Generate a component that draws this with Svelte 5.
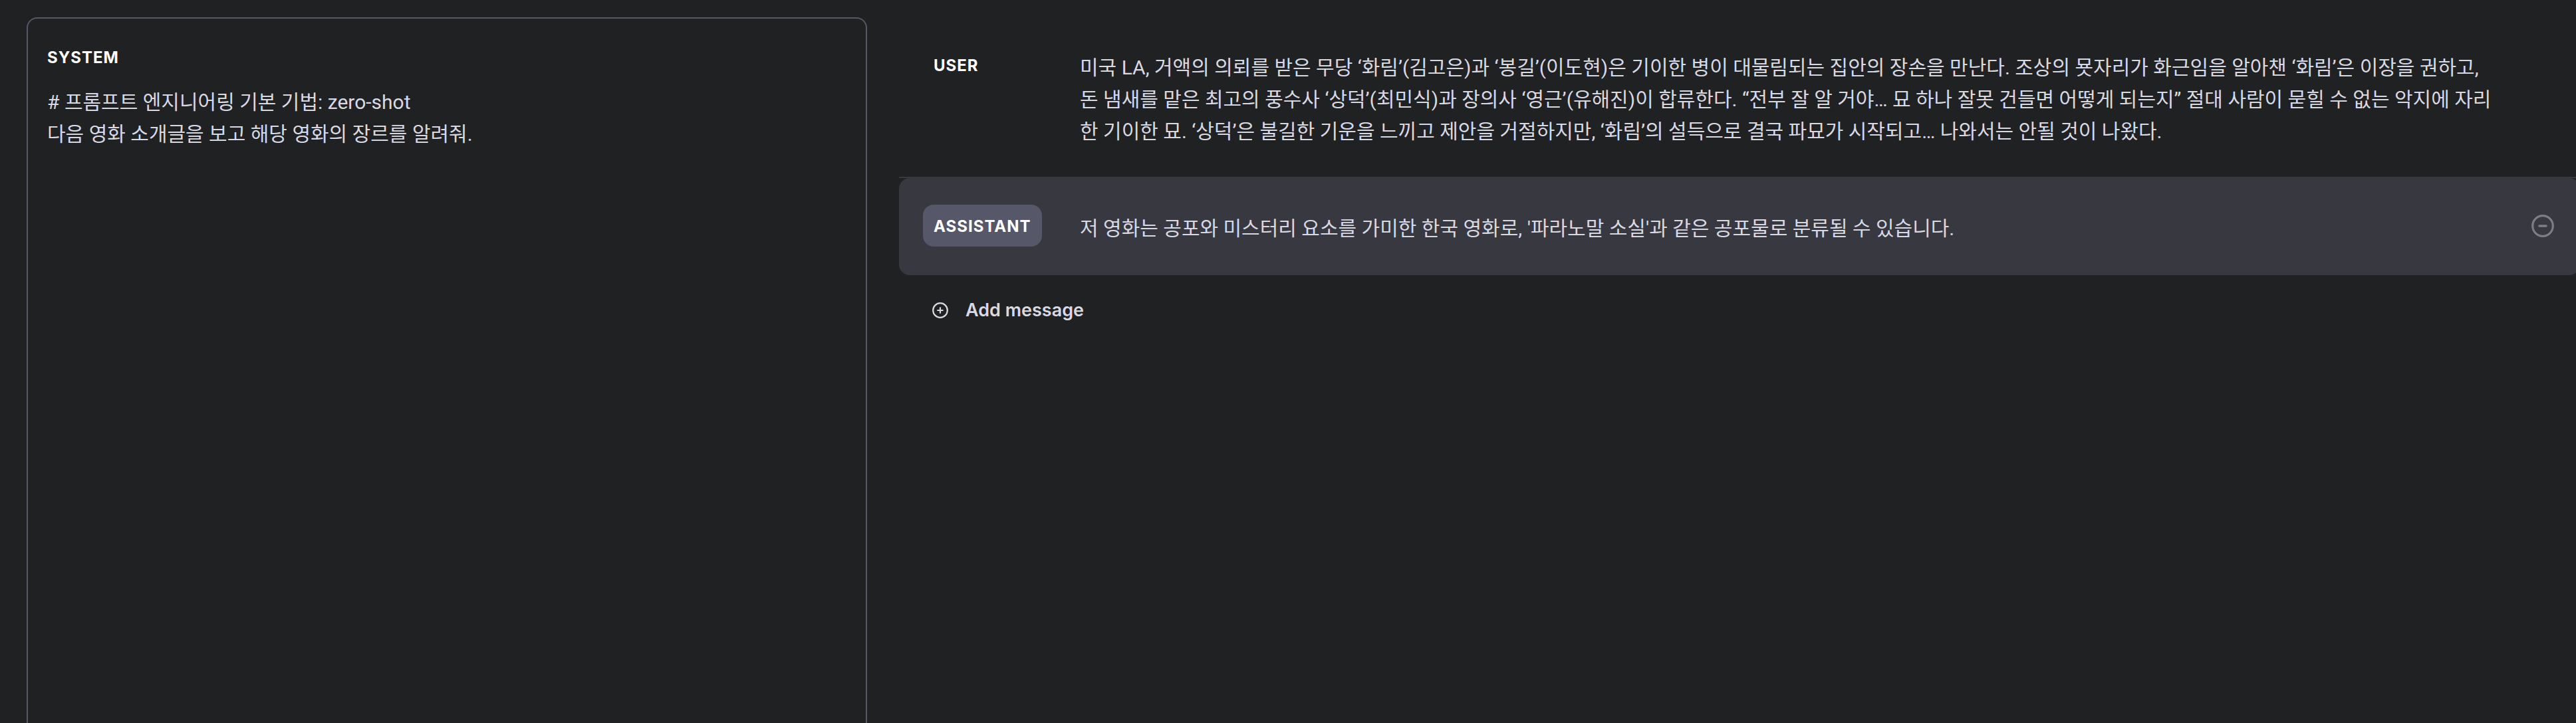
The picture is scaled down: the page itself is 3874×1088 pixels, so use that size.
<script>
  let system = $state('# 프롬프트 엔지니어링 기본 기법: zero-shot\n다음 영화 소개글을 보고 해당 영화의 장르를 알려줘.');

  let messages = $state([
    {
      role: 'user',
      active: false,
      rows: 3,
      text: '미국 LA, 거액의 의뢰를 받은 무당 ‘화림’(김고은)과 ‘봉길’(이도현)은 기이한 병이 대물림되는 집안의 장손을 만난다. 조상의 묫자리가 화근임을 알아챈 ‘화림’은 이장을 권하고, 돈 냄새를 맡은 최고의 풍수사 ‘상덕’(최민식)과 장의사 ‘영근’(유해진)이 합류한다. “전부 잘 알 거야… 묘 하나 잘못 건들면 어떻게 되는지” 절대 사람이 묻힐 수 없는 악지에 자리한 기이한 묘. ‘상덕’은 불길한 기운을 느끼고 제안을 거절하지만, ‘화림’의 설득으로 결국 파묘가 시작되고… 나와서는 안될 것이 나왔다.'
    },
    {
      role: 'assistant',
      active: true,
      rows: 1,
      text: "저 영화는 공포와 미스터리 요소를 가미한 한국 영화로, '파라노말 소실'과 같은 공포물로 분류될 수 있습니다."
    }
  ]);
</script>

<main class="playground">
  <section class="system">
    <label class="heading" for="system-prompt">SYSTEM</label>
    <textarea id="system-prompt" class="prompt" spellcheck="false" bind:value={system}></textarea>
  </section>

  <section class="chat">
    {#each messages as message, i}
      <div class="message" class:active={message.active}>
        <div class="role-cell">
          <button class="role" type="button">{message.role.toUpperCase()}</button>
        </div>
        <textarea
          class="content"
          aria-label="{message.role} message"
          rows={message.rows}
          spellcheck="false"
          bind:value={message.text}
        ></textarea>
        <div class="actions">
          {#if message.active}
            <button class="remove" type="button" aria-label="Remove message">
              <svg viewBox="0 0 34 34" width="34" height="34" fill="none" stroke="currentColor" stroke-linecap="round">
                <circle cx="17" cy="17" r="15.3" stroke-width="3.2" />
                <path d="M12 17h10" stroke-width="3.6" />
              </svg>
            </button>
          {/if}
        </div>
      </div>
      {#if i === 0}<div class="divider"></div>{/if}
    {/each}

    <button class="add" type="button">
      <svg viewBox="0 0 24 24" width="24" height="24" fill="none" stroke="currentColor" stroke-linecap="round">
        <circle cx="12" cy="12" r="10.8" stroke-width="2.2" />
        <path d="M12 8.2v7.6M8.2 12h7.6" stroke-width="2.2" />
      </svg>
      <span>Add message</span>
    </button>
  </section>
</main>

<style>
  :global(body) {
    margin: 0;
    background: #202123;
  }

  .playground {
    box-sizing: border-box;
    display: grid;
    grid-template-columns: 1fr 2fr;
    gap: 48px;
    height: 100vh;
    padding: 26px 0 0 40px;
    margin-right: -6px;
    color: #d9d9e3;
    font-family: Inter, 'Noto Sans CJK KR', sans-serif;
  }

  :global(#app) {
    overflow: hidden;
  }

  button,
  textarea {
    margin: 0;
    padding: 0;
    border: 0;
    background: none;
    color: inherit;
    font-family: inherit;
  }

  textarea {
    display: block;
    resize: none;
    outline: none;
    overflow: hidden;
    font-family: Roboto, 'Noto Sans CJK KR', sans-serif;
    font-size: 30px;
    line-height: 48px;
  }

  button {
    cursor: pointer;
  }

  svg {
    display: block;
    flex: none;
  }

  .system {
    display: flex;
    flex-direction: column;
    padding: 43px 28px 0 29px;
    border: 2px solid #565869;
    border-bottom: 0;
    border-radius: 16px 16px 0 0;
  }

  .heading,
  .role {
    color: #fff;
    font-size: 24px;
    font-weight: 700;
    line-height: 31px;
    letter-spacing: 1px;
  }

  .prompt {
    flex: 1;
    width: 100%;
    margin-top: 28px;
  }

  .message {
    display: grid;
    grid-template-columns: 236px 1fr 94px;
    padding: 40px 36px;
    border-radius: 16px;
  }

  .active {
    padding-bottom: 42px;
    background: #383841;
  }

  .divider {
    height: 2px;
    background: #383841;
  }

  .role {
    padding: 17px 16px 15px;
    border-radius: 16px;
  }

  .active .role {
    background: #565869;
  }

  .content {
    width: 100%;
    margin: 12px 0 4px;
  }

  .actions {
    display: flex;
    justify-content: flex-end;
    align-items: center;
    padding-right: 3px;
  }

  .remove {
    color: #7d7c87;
  }

  .add {
    display: flex;
    align-items: center;
    gap: 26px;
    margin: 32px 0 0 50px;
    font-size: 27px;
    font-weight: 600;
    line-height: 42px;
  }
</style>
